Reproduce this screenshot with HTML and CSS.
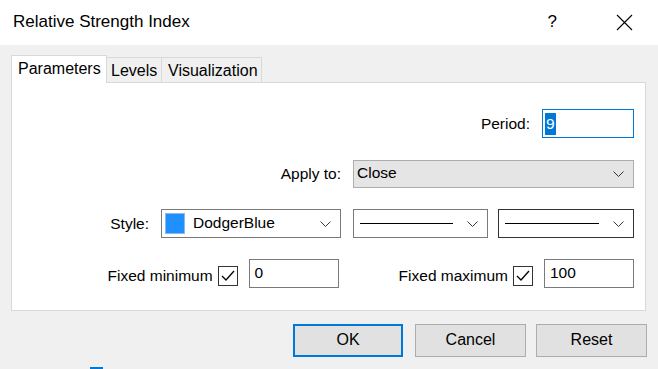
FILE: index.html
```html
<!DOCTYPE html>
<html lang="en">

<head>
    <meta charset="UTF-8">
    <meta name="viewport" content="width=device-width, initial-scale=1.0">
    <title>Relative Strength Index</title>
    <link rel="stylesheet" href="styles.css">
</head>

<body>
    <div class="dialog">
        <div class="titlebar">
            <span class="title">Relative Strength Index</span>
            <span class="help">?</span>
            <svg class="close" width="17" height="17" viewBox="0 0 17 17">
                <path d="M1 1 L16 16 M16 1 L1 16" stroke="#000" stroke-width="1.1" fill="none" />
            </svg>
        </div>

        <div class="tabs">
            <div class="tab tab-active">Parameters</div>
            <div class="tab tab-levels">Levels</div>
            <div class="tab tab-visual">Visualization</div>
        </div>

        <div class="panel">
            <div class="row">
                <span class="label">Period:</span>
                <div class="input input-focus period-input"><span class="selected">9</span></div>
            </div>

            <div class="row">
                <span class="label">Apply to:</span>
                <div class="select select-gray apply-select">
                    <span class="select-text">Close</span>
                    <svg class="chevron" width="11" height="6" viewBox="0 0 11 6">
                        <path d="M0.5 0.5 L5.5 5.5 L10.5 0.5" stroke="#333" stroke-width="1" fill="none" />
                    </svg>
                </div>
            </div>

            <div class="row">
                <span class="label">Style:</span>
                <div class="select color-select">
                    <span class="swatch"></span>
                    <span class="select-text">DodgerBlue</span>
                    <svg class="chevron" width="11" height="6" viewBox="0 0 11 6">
                        <path d="M0.5 0.5 L5.5 5.5 L10.5 0.5" stroke="#333" stroke-width="1" fill="none" />
                    </svg>
                </div>
                <div class="select line-select">
                    <span class="line-sample"></span>
                    <svg class="chevron" width="11" height="6" viewBox="0 0 11 6">
                        <path d="M0.5 0.5 L5.5 5.5 L10.5 0.5" stroke="#333" stroke-width="1" fill="none" />
                    </svg>
                </div>
                <div class="select line-select select-dark">
                    <span class="line-sample"></span>
                    <svg class="chevron" width="11" height="6" viewBox="0 0 11 6">
                        <path d="M0.5 0.5 L5.5 5.5 L10.5 0.5" stroke="#333" stroke-width="1" fill="none" />
                    </svg>
                </div>
            </div>

            <div class="row">
                <span class="label fixed-label">Fixed minimum</span>
                <span class="checkbox">
                    <svg width="14" height="12" viewBox="0 0 14 12">
                        <path d="M1 6 L5 10 L13 1" stroke="#000" stroke-width="1.3" fill="none" />
                    </svg>
                </span>
                <div class="input fixed-input">0</div>
                <span class="label fixed-label fixed-max">Fixed maximum</span>
                <span class="checkbox">
                    <svg width="14" height="12" viewBox="0 0 14 12">
                        <path d="M1 6 L5 10 L13 1" stroke="#000" stroke-width="1.3" fill="none" />
                    </svg>
                </span>
                <div class="input fixed-input">100</div>
            </div>
        </div>

        <div class="buttons">
            <button class="btn btn-default">OK</button>
            <button class="btn btn-cancel">Cancel</button>
            <button class="btn btn-reset">Reset</button>
        </div>

        <span class="taskbar-mark"></span>
    </div>
</body>

</html>
```

FILE: styles.css
```css
body {
    margin: 0;
    font-family: 'Liberation Sans', Arial, sans-serif;
    font-size: 15.5px;
    color: #000;
    background-color: #f0f0f0;
}

.dialog {
    position: relative;
    width: 658px;
    height: 369px;
    overflow: hidden;
    background-color: #f0f0f0;
}

.titlebar {
    height: 45px;
    background-color: #fff;
    display: flex;
    align-items: center;
    padding-left: 13px;
    padding-right: 25px;
}

.title {
    flex: 1;
    font-size: 17px;
    padding-bottom: 1px;
}

.help {
    font-size: 17px;
    margin-right: 59px;
    padding-bottom: 1px;
}

.close {
    display: block;
}

.tabs {
    display: flex;
    align-items: flex-end;
    margin-top: 10px;
    padding-left: 11px;
    position: relative;
    z-index: 1;
}

.tab {
    height: 25px;
    box-sizing: border-box;
    border: 1px solid #d9d9d9;
    border-bottom: none;
    border-left: none;
    background-color: #f0f0f0;
    padding: 3px 0 0 4px;
    font-size: 16px;
    line-height: 20px;
}

.tab-active {
    width: 96px;
    height: 28px;
    background-color: #fff;
    border-left: 1px solid #d9d9d9;
    padding: 3px 0 0 6px;
    margin-bottom: -1px;
}

.tab-levels {
    width: 55px;
}

.tab-visual {
    width: 100px;
    padding-left: 6px;
}

.panel {
    margin: 0 12px 0 11px;
    height: 229px;
    box-sizing: border-box;
    background-color: #fff;
    border: 1px solid #d9d9d9;
    padding: 26px 11px 0 0;
    display: flex;
    flex-direction: column;
    gap: 21px;
}

.row {
    display: flex;
    justify-content: flex-end;
    align-items: center;
    height: 29px;
}

.label {
    margin-right: 12px;
}

.input {
    height: 29px;
    box-sizing: border-box;
    border: 1px solid #7a7a7a;
    background-color: #fff;
    padding: 3px 0 0 6px;
    line-height: 19px;
}

.input-focus {
    border-color: #0078d7;
}

.period-input {
    width: 92px;
    padding-left: 2px;
}

.selected {
    background-color: #0078d7;
    color: #fff;
    display: inline-block;
    padding: 1px 1px;
    line-height: 20px;
}

.select {
    height: 29px;
    box-sizing: border-box;
    border: 1px solid #7a7a7a;
    background-color: #fff;
    display: flex;
    align-items: center;
    padding: 0 9px 0 3px;
}

.select-gray {
    background-color: #e5e5e5;
    border-color: #adadad;
    height: 28px;
}

.select-dark {
    border-color: #333;
}

.select-text {
    flex: 1;
    padding-bottom: 2px;
}

.chevron {
    display: block;
}

.apply-select {
    width: 281px;
}

.color-select {
    width: 180px;
    margin-right: 12px;
}

.swatch {
    width: 20px;
    height: 21px;
    background-color: #1e90ff;
    border: 1px solid #8fb8e6;
    box-sizing: border-box;
    margin-right: 8px;
}

.line-select {
    width: 135px;
    padding-left: 6px;
    margin-right: 10px;
}

.line-select:last-child {
    width: 136px;
    margin-right: 0;
}

.line-sample {
    flex: 1;
    height: 1px;
    background-color: #000;
    margin-right: 14px;
}

.fixed-label {
    margin-right: 5px;
    margin-top: 5px;
}

.fixed-max {
    margin-left: 60px;
}

.checkbox {
    width: 20px;
    height: 20px;
    box-sizing: border-box;
    border: 1px solid #333;
    background-color: #fff;
    display: flex;
    align-items: center;
    justify-content: center;
    margin-top: 5px;
    margin-right: 11px;
}

.checkbox svg {
    display: block;
}

.fixed-input {
    width: 90px;
    padding-left: 5px;
}

.buttons {
    display: flex;
    justify-content: flex-end;
    margin-top: 13px;
    padding-right: 11px;
}

.btn {
    width: 111px;
    height: 33px;
    box-sizing: border-box;
    border: 1px solid #adadad;
    background-color: #e1e1e1;
    font-family: 'Liberation Sans', Arial, sans-serif;
    font-size: 16px;
    color: #000;
    padding: 0 0 1px;
    margin-left: 10px;
}

.btn-default {
    width: 110px;
    border: 2px solid #0078d7;
    margin-left: 0;
}

.btn-cancel {
    margin-left: 12px;
}

.taskbar-mark {
    position: absolute;
    left: 90px;
    bottom: 0;
    width: 13px;
    height: 2px;
    background-color: #0078d7;
}
```
